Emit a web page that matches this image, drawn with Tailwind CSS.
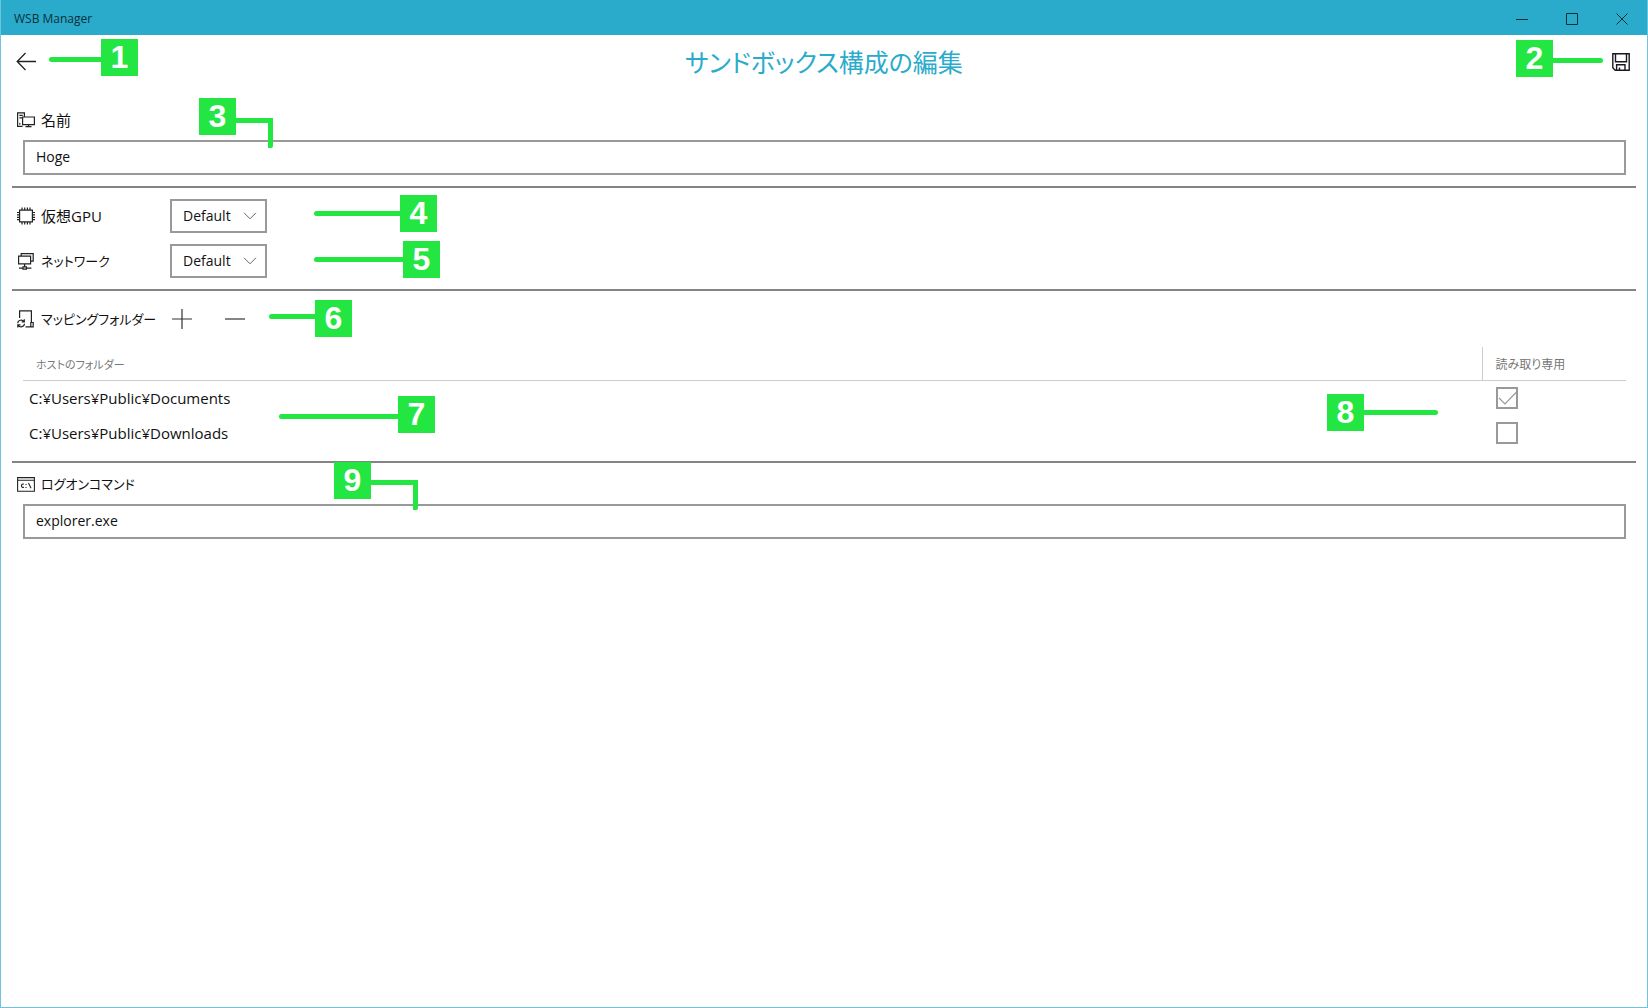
<!DOCTYPE html>
<html lang="ja">
<head>
<meta charset="utf-8">
<title>WSB Manager</title>
<script src="https://cdn.jsdelivr.net/npm/@tailwindcss/browser@4"></script>
</head>
<body class="relative flex min-h-screen flex-col border border-t-0 border-[#6cc5dc] bg-white font-['Open_Sans','Noto_Sans_CJK_JP',sans-serif] text-[15px] leading-5 text-[#111] [font-feature-settings:'palt']">

<header class="-mx-px flex h-[35px] items-center justify-between bg-[#2aabcc] pr-px pl-3.5 text-[#0b2f38]">
  <span class="pt-0.5 text-[12px] leading-4">WSB Manager</span>
  <div class="flex h-full pt-0.5">
    <button type="button" aria-label="最小化" class="flex w-[50px] items-center justify-center"><svg width="12" height="12" viewBox="0 0 12 12" fill="none" stroke="currentColor"><path d="M0 6.5h12"/></svg></button>
    <button type="button" aria-label="最大化" class="flex w-[50px] items-center justify-center"><svg width="12" height="12" viewBox="0 0 12 12" fill="none" stroke="currentColor"><path d="M.5.5h11v11H.5z"/></svg></button>
    <button type="button" aria-label="閉じる" class="flex w-[50px] items-center justify-center"><svg width="12" height="12" viewBox="0 0 12 12" fill="none" stroke="currentColor"><path d="M.5.5l11 11M11.5.5l-11 11"/></svg></button>
  </div>
</header>

<main class="flex-1 px-[11px]">
  <div class="grid h-[53px] grid-cols-[1fr_auto_1fr] items-center">
    <button type="button" aria-label="戻る" class="ml-1 w-fit"><svg width="20" height="20" viewBox="0 0 20 20" fill="none" stroke="#222" stroke-width="1.300"><path d="M1.500 9.500H20M9.500 1L1.200 9.500l8.300 8.500"/></svg></button>
    <h1 class="text-[25px] leading-8 text-[#2aabcc]">サンドボックス構成の編集</h1>
    <button type="button" aria-label="保存" class="mr-1.5 ml-auto w-fit"><svg width="18" height="18" viewBox="0 0 18 18" fill="none" stroke="#1b1620" stroke-width="1.400"><path d="M.8.8h16.400v16.400H3.200L.8 14.800zM3.500.8v8h11v-8M4.600 17v-5.200h8.400V17M7.500 17v-2.600"/></svg></button>
  </div>

  <section class="pt-[22px] pb-[11px]">
    <label for="name" class="ml-[5px] flex h-5 items-center gap-1.5">
      <svg width="18" height="16" viewBox="0 0 18 16" fill="none" stroke="#222" stroke-width="1.200"><path d="M5.600 14.400H.6V.8h6.800v4.200M2.300 3.400h3.400M2.300 5.800h3.400M2 11.800h1.500M5.600 5h11.800v7.600H5.600zM11.500 12.600v2M8.500 14.600h6"/></svg>
      名前
    </label>
    <div class="pt-[10px] pr-[10px] pl-[11px]"><input id="name" type="text" value="Hoge" class="h-[35px] w-full border-2 border-[#999] bg-white px-[11px] pb-0.5 text-[14px]"></div>
  </section>

  <section class="border-t-2 border-[#848484] pt-[11px] pb-[11px]">
    <div class="grid grid-cols-[153px_auto] justify-start gap-y-[11px] pl-[5px]">
      <label for="gpu" class="flex items-center gap-1.5">
        <svg width="18" height="18" viewBox="0 0 18 18" fill="none" stroke="#222" stroke-width="1.200"><path d="M2.600 3.200h12.800v11.600H2.600zM5 .5v2.700M7.700.5v2.700M10.400.5v2.700M13 .5v2.700M5 14.800v2.700M7.700 14.800v2.700M10.400 14.800v2.700M13 14.800v2.700M0 5.500h2.600M0 7.900h2.600M0 10.300h2.600M0 12.700h2.600M15.400 5.500H18M15.400 7.900H18M15.400 10.300H18M15.400 12.700H18"/></svg>
        仮想GPU
      </label>
      <div class="relative w-[97px]">
        <select id="gpu" class="h-[34px] w-full appearance-none border-2 border-[#999] bg-white pl-[11px] text-[14px]"><option>Default</option><option>Enable</option><option>Disable</option></select>
        <svg class="pointer-events-none absolute top-[13px] right-[10px]" width="14" height="8" viewBox="0 0 14 8" fill="none" stroke="#666"><path d="M1 .8l6 6 6-6"/></svg>
      </div>
      <label for="network" class="flex items-center gap-1.5 text-[13px]">
        <svg width="18" height="18" viewBox="0 0 18 18" fill="none" stroke="#222" stroke-width="1.200"><path d="M1.600 4.200h12v7.600h-12zM4.200 4V1.600h12v7.600h-2.400M7.600 11.800v3M2 16.200h4M9.400 16.200h5M6 14.800h3.400v2.400H6z"/></svg>
        ネットワーク
      </label>
      <div class="relative w-[97px]">
        <select id="network" class="h-[34px] w-full appearance-none border-2 border-[#999] bg-white pl-[11px] text-[14px]"><option>Default</option><option>Enable</option><option>Disable</option></select>
        <svg class="pointer-events-none absolute top-[13px] right-[10px]" width="14" height="8" viewBox="0 0 14 8" fill="none" stroke="#666"><path d="M1 .8l6 6 6-6"/></svg>
      </div>
    </div>
  </section>

  <section class="border-t-2 border-[#848484] pt-[18px] pb-[11px]">
    <div class="flex h-5 items-center pl-[5px]">
      <h2 class="flex w-[155px] items-center gap-1.5 text-[13px] whitespace-nowrap">
        <svg width="18" height="18" viewBox="0 0 18 18" fill="none" stroke="#222" stroke-width="1.200"><path d="M2.600 8V.9h11.800V12M8.500 16.900h5.300V12.500h2.400v4.400h-2.400"/><path d="M.7 13.200c.2-3.200 4.600-4.200 6.300-1.600M7.300 9.200v2.700H4.700M7.500 13.700c-.2 3.200-4.600 4.200-6.300 1.600M.8 17.600v-2.700h2.700"/></svg>
        マッピングフォルダー
      </h2>
      <button type="button" aria-label="追加" class="flex w-5 justify-center"><svg width="20" height="20" viewBox="0 0 20 20" fill="none" stroke="#333" stroke-width="1.200"><path d="M0 10h20M10 0v20"/></svg></button>
      <button type="button" aria-label="削除" class="ml-[33px] flex w-5 justify-center"><svg width="20" height="20" viewBox="0 0 20 20" fill="none" stroke="#333" stroke-width="1.200"><path d="M0 10h20"/></svg></button>
    </div>
    <div class="pt-[18px] pr-[10px] pl-[11px]">
      <table class="w-full table-fixed">
        <colgroup><col><col class="w-[144px]"></colgroup>
        <thead>
          <tr class="h-[33px] border-b border-[#ccc] text-left text-[#777]">
            <th class="pt-1 pl-[13px] text-[11px] font-normal">ホストのフォルダー</th>
            <th class="border-l border-[#ccc] pt-1 pl-[13px] text-[12px] font-normal">読み取り専用</th>
          </tr>
        </thead>
        <tbody>
          <tr class="h-[35px]">
            <td class="pt-px pl-1.5">C:¥Users¥Public¥Documents</td>
            <td class="pt-px pl-[14px]"><div class="relative h-[22px] w-[22px]">
              <input type="checkbox" checked aria-label="Documents 読み取り専用" class="block h-[22px] w-[22px] appearance-none border-2 border-[#999]">
              <svg class="pointer-events-none absolute inset-0" width="22" height="22" viewBox="0 0 22 22" fill="none" stroke="#999" stroke-width="1.200"><path d="M3 11l6 6L20 5.500"/></svg>
            </div></td>
          </tr>
          <tr class="h-[35px]">
            <td class="pt-px pl-1.5">C:¥Users¥Public¥Downloads</td>
            <td class="pt-px pl-[14px]"><input type="checkbox" aria-label="Downloads 読み取り専用" class="block h-[22px] w-[22px] appearance-none border-2 border-[#999]"></td>
          </tr>
        </tbody>
      </table>
    </div>
  </section>

  <section class="border-t-2 border-[#848484] pt-[11px]">
    <label for="command" class="ml-[5px] flex h-5 items-center gap-1.5 text-[13px]">
      <svg width="18" height="15" viewBox="0 0 18 15" fill="none" stroke="#222" stroke-width="1.100"><path d="M.6.6h16.800v13.600H.6zM.6 3.200h16.800M6.900 7.200a1.700 1.700 0 1 0 0 3M9 7v1M9 10v1M11.500 6l2.500 5.200"/></svg>
      ログオンコマンド
    </label>
    <div class="pt-[10px] pr-[10px] pl-[11px]"><input id="command" type="text" value="explorer.exe" class="h-[35px] w-full border-2 border-[#999] bg-white px-[11px] pb-0.5 text-[14px]"></div>
  </section>
</main>

<!-- Numbered callouts laid over the form -->
<div class="pointer-events-none absolute inset-0 font-['Liberation_Sans',Arial,sans-serif] text-[32px] leading-[37px] font-bold text-white">
  <div class="absolute top-[39px] left-[48px] flex items-center"><i class="mt-1 h-[5px] w-[52px] rounded-l-full bg-[#24e642]"></i><b class="w-[37px] bg-[#24e642] text-center">1</b></div>
  <div class="absolute top-[40px] right-[44px] flex items-center"><b class="w-[37px] bg-[#24e642] text-center">2</b><i class="mt-1 h-[5px] w-[50px] rounded-r-full bg-[#24e642]"></i></div>
  <div class="absolute top-[98px] left-[198px] flex items-start"><b class="w-[37px] bg-[#24e642] text-center">3</b><i class="mt-5 h-[30px] w-[37px] rounded-b-xs border-t-[5px] border-r-[5px] border-[#24e642]"></i></div>
  <div class="absolute top-[195px] left-[313px] flex items-center"><i class="h-[5px] w-[86px] rounded-l-full bg-[#24e642]"></i><b class="w-[37px] bg-[#24e642] text-center">4</b></div>
  <div class="absolute top-[241px] left-[313px] flex items-center"><i class="h-[5px] w-[89px] rounded-l-full bg-[#24e642]"></i><b class="w-[37px] bg-[#24e642] text-center">5</b></div>
  <div class="absolute top-[300px] left-[268px] flex items-center"><i class="mb-1 h-[5px] w-[46px] rounded-l-full bg-[#24e642]"></i><b class="w-[37px] bg-[#24e642] text-center">6</b></div>
  <div class="absolute top-[396px] left-[278px] flex items-center"><i class="mt-1 h-[5px] w-[119px] rounded-l-full bg-[#24e642]"></i><b class="w-[37px] bg-[#24e642] text-center">7</b></div>
  <div class="absolute top-[394px] right-[209px] flex items-center"><b class="w-[37px] bg-[#24e642] text-center">8</b><i class="h-[5px] w-[74px] rounded-r-full bg-[#24e642]"></i></div>
  <div class="absolute top-[462px] left-[333px] flex items-start"><b class="w-[37px] bg-[#24e642] text-center">9</b><i class="mt-[18px] h-[30px] w-[47px] rounded-b-xs border-t-[5px] border-r-[5px] border-[#24e642]"></i></div>
</div>
</body>
</html>
